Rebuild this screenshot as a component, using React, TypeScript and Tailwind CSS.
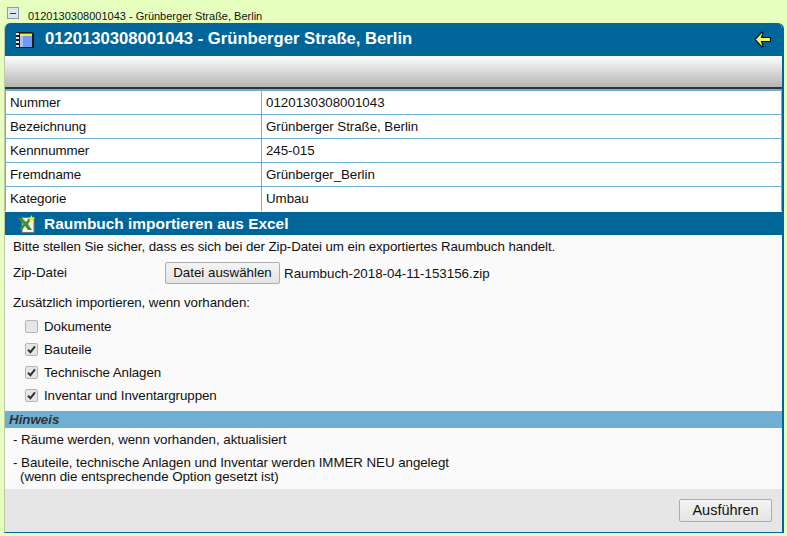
import React from 'react';

const rows = [
  ['Nummer', '0120130308001043'],
  ['Bezeichnung', 'Grünberger Straße, Berlin'],
  ['Kennnummer', '245-015'],
  ['Fremdname', 'Grünberger_Berlin'],
  ['Kategorie', 'Umbau'],
];

const options = [
  { label: 'Dokumente', checked: false },
  { label: 'Bauteile', checked: true },
  { label: 'Technische Anlagen', checked: true },
  { label: 'Inventar und Inventargruppen', checked: true },
];

const FilmIcon = () => (
  <svg width="18" height="18" viewBox="0 0 18 18" className="shrink-0">
    <path d="M0 1 L15 1 Q18 1 18 4 L18 17 L0 17 Z" fill="#1c1c1c" />
    <rect x="0" y="2" width="3" height="2" fill="#e4e4e4" />
    <rect x="0" y="6" width="3" height="2" fill="#e4e4e4" />
    <rect x="0" y="10" width="3" height="2" fill="#e4e4e4" />
    <rect x="0" y="14" width="3" height="2" fill="#e4e4e4" />
    <rect x="4" y="2" width="12" height="1" fill="#6b6b6b" />
    <rect x="4" y="3" width="12" height="2" fill="#f4e83c" />
    <rect x="4" y="5" width="12" height="11" fill="#6f9bf2" />
    <rect x="4" y="5" width="3" height="11" fill="#a9c4f8" />
  </svg>
);

const BackArrow = () => (
  <svg width="17" height="17" viewBox="0 0 17 17">
    <path d="M1 8.5 L8 1 L9 2 L7.5 6.5 L16.5 6.5 L16.5 10.5 L7.5 10.5 L9 15 L8 16 Z" fill="#fff65c" stroke="#111" strokeWidth="1.2" />
  </svg>
);

const ExcelIcon = () => (
  <svg width="18" height="18" viewBox="0 0 18 18" className="shrink-0">
    <rect x="4" y="2.5" width="12" height="15" fill="#f2f2ea" stroke="#777" strokeWidth="1" />
    <path d="M0 3 L4 3 L8 7 L11 3 L14 4 L10 9 L14 15 L10 15 L7 11 L4 15 L1 14 L5.5 9 Z" fill="#3f8f3a" />
    <path d="M13.5 0 L14.6 2.4 L17.2 2.6 L15.2 4.3 L15.9 6.8 L13.5 5.4 L11.1 6.8 L11.8 4.3 L9.8 2.6 L12.4 2.4 Z" fill="#ffe23c" />
  </svg>
);

const Check = ({ checked }: { checked: boolean }) => (
  <span className="w-[13px] h-[13px] rounded-[2px] border border-[#b5b5b5] bg-[#e6e6e6] flex items-center justify-center shrink-0">
    {checked && (
      <svg width="9" height="9" viewBox="0 0 9 9">
        <path d="M1 4.8 L3.4 7.2 L8 1.4" fill="none" stroke="#333" strokeWidth="2" />
      </svg>
    )}
  </span>
);

export default function App() {
  return (
    <div className="w-[787px] h-[536px] overflow-hidden bg-[#e6ffbf] text-[13.33px] text-[#111] font-['Liberation_Sans',Arial,sans-serif]">
      {/* Baumknoten oben */}
      <div className="h-[23px] flex items-center pl-[7px] pt-[9px]">
        <span className="w-[12px] h-[12px] border border-[#8a9ab0] bg-[#dfe4ec] flex items-center justify-center mb-[6px]">
          <span className="w-[6px] h-[1px] bg-[#333]" />
        </span>
        <span className="ml-[9px] text-[11px] leading-none">0120130308001043 - Grünberger Straße, Berlin</span>
      </div>

      <div className="ml-[4px] w-[780px] h-[510px] flex flex-col bg-[#fafafa] border-l border-l-[#b9c9a8] border-r-2 border-r-[#006699] border-b border-b-[#006699] rounded-tl-[6px] rounded-tr-[6px] overflow-hidden">
        <div className="h-[33px] shrink-0 bg-[#006699] flex items-center pl-[11px] pr-[11px]">
          <FilmIcon />
          <span className="ml-[11px] text-white font-bold text-[16.65px] leading-none flex-1">
            0120130308001043 - Grünberger Straße, Berlin
          </span>
          <BackArrow />
        </div>

        <div className="h-[33px] shrink-0 bg-gradient-to-b from-white to-[#b4b4b4] border-b-2 border-b-[#333]" />

        <div className="shrink-0 border-t-2 border-t-[#6db0d4] border-l border-r border-[#6db0d4]">
          {rows.map(([name, value], i) => (
            <div key={name} className="h-[24px] flex border-b border-b-[#6db0d4] bg-white last:border-b-0">
              <div className="w-[256px] pl-[4px] border-r border-r-[#6db0d4] flex items-center tracking-[-0.08px]">{name}</div>
              <div className={i === 0 ? 'flex-1 pl-[4px] flex items-center' : 'flex-1 pl-[4px] flex items-center tracking-[-0.05px]'}>{value}</div>
            </div>
          ))}
        </div>

        <div className="h-[23px] shrink-0 mt-[1px] bg-[#006699] flex items-center pl-[13px]">
          <ExcelIcon />
          <span className="ml-[8px] text-white font-bold text-[15.45px] leading-none">Raumbuch importieren aus Excel</span>
        </div>

        <div className="flex-1 flex flex-col">
          <p className="pl-[8px] pt-[4px] leading-[16px] tracking-[-0.08px]">
            Bitte stellen Sie sicher, dass es sich bei der Zip-Datei um ein exportiertes Raumbuch handelt.
          </p>
          <div className="flex items-center pl-[8px] mt-[7px] h-[22px]">
            <span className="w-[152px]">Zip-Datei</span>
            <button className="h-[22px] w-[115px] rounded-[2px] border border-[#adadad] bg-gradient-to-b from-[#f4f4f4] to-[#e4e4e4] text-[13.33px]">
              Datei auswählen
            </button>
            <span className="ml-[4px] mt-[1px]">Raumbuch-2018-04-11-153156.zip</span>
          </div>
          <p className="pl-[8px] mt-[11px] leading-[16px] tracking-[-0.08px]">Zusätzlich importieren, wenn vorhanden:</p>

          <div className="pl-[20px] mt-[4px] flex flex-col">
            {options.map((o) => (
              <label key={o.label} className="h-[23px] flex items-center gap-[6px] tracking-[-0.08px]">
                <Check checked={o.checked} />
                <span>{o.label}</span>
              </label>
            ))}
          </div>

          <div className="h-[17px] mt-[4px] bg-[#6db0d4] pl-[4px] flex items-center font-bold italic text-[#333]">Hinweis</div>

          <div className="pl-[8px] leading-[14px] pt-[5px] tracking-[-0.05px]">
            <p>- Räume werden, wenn vorhanden, aktualisiert</p>
            <p className="mt-[9px]">- Bauteile, technische Anlagen und Inventar werden IMMER NEU angelegt</p>
            <p className="pl-[7px]">(wenn die entsprechende Option gesetzt ist)</p>
          </div>
        </div>

        <div className="h-[43px] shrink-0 bg-[#e6e6e6] flex items-center justify-end pr-[10px]">
          <button className="h-[23px] w-[93px] rounded-[2px] border border-[#adadad] bg-gradient-to-b from-[#f4f4f4] to-[#e4e4e4] text-[14.5px]">
            Ausführen
          </button>
        </div>
      </div>
    </div>
  );
}
